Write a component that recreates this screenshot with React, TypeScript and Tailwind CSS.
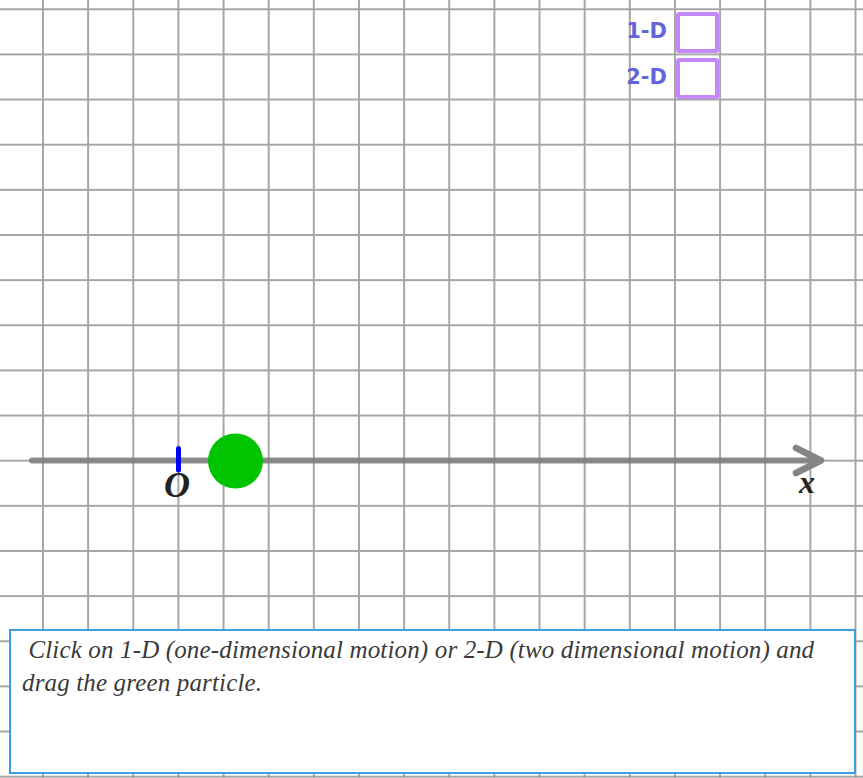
export default function App() {
    const gridBg =
        'bg-[linear-gradient(to_right,#a6a6a6_1.5px,transparent_1.5px),linear-gradient(to_bottom,#a6a6a6_1.5px,transparent_1.5px)] bg-[size:45.15px_45.15px] bg-[position:42px_8.3px]';

    return (
        <div className={`relative w-[863px] h-[778px] overflow-hidden bg-white ${gridBg} flex flex-col`}>
            {/* dimension switches */}
            <div className="flex flex-col items-end pr-[144px] pt-[12px] gap-[5px]">
                {['1-D', '2-D'].map((label) => (
                    <div key={label} className="flex items-center gap-[9px]">
                        <span className="font-['DejaVu_Sans',sans-serif] font-bold text-[21px] leading-none text-[#6464dc] -mt-[2px]">
                            {label}
                        </span>
                        <div className="w-[43px] h-[41px] rounded-[3px] border-4 border-[#c488fb] bg-white" />
                    </div>
                ))}
            </div>

            {/* axis */}
            <svg className="mt-[311px] shrink-0" width="863" height="100" viewBox="0 0 863 100">
                <line x1="32" y1="50.5" x2="818" y2="50.5" stroke="#7a7a7a" strokeOpacity="0.85" strokeWidth="6" strokeLinecap="round" />
                <polyline points="796,38 821,50.5 796,63" fill="none" stroke="#858585" strokeWidth="6.5" strokeLinecap="round" strokeLinejoin="round" />
                <line x1="178.5" y1="38.5" x2="178.5" y2="60" stroke="#0000ff" strokeWidth="5" strokeLinecap="round" />
                <circle cx="235.5" cy="51" r="27.5" fill="#00c400" />
                <text x="177" y="87" textAnchor="middle" fontFamily="'Liberation Serif', serif" fontStyle="italic" fontWeight="bold" fontSize="36" fill="#222">O</text>
                <text x="807" y="83" textAnchor="middle" fontFamily="'Liberation Serif', serif" fontStyle="italic" fontWeight="bold" fontSize="32" fill="#222">x</text>
            </svg>

            {/* instructions */}
            <div className="mt-[119px] ml-[9px] w-[847px] h-[145px] border-2 border-[#3c9fe6] bg-white px-[11px] pt-[2px]">
                <p className="font-['Liberation_Serif',serif] italic text-[25px] tracking-[0.15px] leading-[33px] text-[#3a3a3a]">
                    {'\u00a0'}Click on 1-D (one-dimensional motion) or 2-D (two dimensional motion) and
                    <br />
                    drag the green particle.
                </p>
            </div>
        </div>
    );
}
